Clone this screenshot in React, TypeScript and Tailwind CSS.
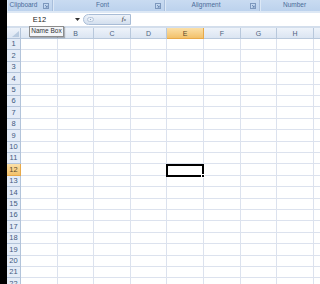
import React from "react";

const cols = [
  { l: "A", w: "w-[37px]" },
  { l: "B", w: "w-[36px]" },
  { l: "C", w: "w-[37px]" },
  { l: "D", w: "w-[36px]" },
  { l: "E", w: "w-[37px]" },
  { l: "F", w: "w-[37px]" },
  { l: "G", w: "w-[36px]" },
  { l: "H", w: "w-[37px]" },
  { l: "", w: "w-[37px]" },
];

const rowH = [
  "h-[11px]", "h-[12px]", "h-[11px]", "h-[12px]", "h-[11px]", "h-[11px]",
  "h-[12px]", "h-[11px]", "h-[12px]", "h-[11px]", "h-[11px]", "h-[12px]",
  "h-[11px]", "h-[12px]", "h-[11px]", "h-[11px]", "h-[12px]", "h-[11px]",
  "h-[12px]", "h-[11px]", "h-[11px]", "h-[12px]",
];

function Launcher() {
  return (
    <svg width="6" height="6" viewBox="0 0 6 6" className="shrink-0">
      <rect x="0.5" y="0.5" width="5" height="5" fill="none" stroke="#7d98bd" strokeWidth="1" />
      <path d="M2 2 L4.2 4.2 M4.2 2.6 V4.2 H2.6" stroke="#5f7fab" strokeWidth="0.8" fill="none" />
    </svg>
  );
}

function Group({ label, w, launcher = true }: { label: string; w: string; launcher?: boolean }) {
  return (
    <div className={`${w} h-full flex items-center border-r border-r-[#a9bfdc] shadow-[inset_1px_0_0_#dce8f6] shrink-0`}>
      <div className="flex-1 text-center text-[6.5px] leading-none text-[#4a6c99]">{label}</div>
      {launcher && (
        <div className="w-[12px] flex justify-center">
          <Launcher />
        </div>
      )}
    </div>
  );
}

export default function App() {
  return (
    <div className="w-[320px] h-[284px] overflow-hidden flex bg-white font-['Liberation_Sans',Arial,sans-serif]">
      <div className="w-[7px] bg-black shrink-0" />
      <div className="flex-1 flex flex-col relative overflow-hidden">
        {/* Ribbon group labels */}
        <div className="h-[11px] flex bg-gradient-to-b from-[#c9dbf1] to-[#bcd2ed] shrink-0">
          <Group label="Clipboard" w="w-[46px]" />
          <Group label="Font" w="w-[112px]" />
          <Group label="Alignment" w="w-[95px]" />
          <Group label="Number" w="w-[70px]" launcher={false} />
        </div>
        <div className="h-[2px] bg-[#dde8f5] shrink-0" />
        {/* Formula bar */}
        <div className="h-[13px] flex items-center bg-white shrink-0">
          <div className="w-[65px] text-center text-[7.5px] leading-none text-[#222]">E12</div>
          <div className="w-[10px] flex justify-center">
            <svg width="5" height="3" viewBox="0 0 5 3">
              <path d="M0 0 H5 L2.5 3 Z" fill="#333" />
            </svg>
          </div>
          <div className="ml-[1px] w-[48px] h-[11px] rounded-l-full rounded-r-[2px] border border-[#a8bcd6] bg-gradient-to-b from-[#eef3fa] to-[#d3dfee] flex items-center">
            <div className="ml-[3px] w-[7px] h-[5px] rounded-full border border-[#b6c6db] bg-[#e9eff7] flex items-center justify-center">
              <div className="w-[1px] h-[1px] bg-[#8ea4c2]" />
            </div>
            <div className="flex-1" />
            <div className="mr-[4px] text-[7px] leading-none italic font-['Liberation_Serif',serif] text-[#333]">
              f<span className="text-[5px]">x</span>
            </div>
          </div>
          <div className="flex-1" />
        </div>
        <div className="h-[2px] bg-[#d3deec] shrink-0" />
        {/* Grid */}
        <div className="flex flex-col shrink-0">
          <div className="h-[11px] flex shrink-0">
            <div className="w-[14px] h-full bg-gradient-to-b from-[#eef3fa] to-[#dbe5f2] border-r border-b border-[#b3c4da] relative shrink-0">
              <svg width="7" height="6" viewBox="0 0 7 6" className="absolute right-[1px] bottom-[1px]">
                <path d="M7 0 V6 H0 Z" fill="#b9cbe0" />
              </svg>
            </div>
            {cols.map((c, i) => (
              <div
                key={i}
                className={`${c.w} h-full shrink-0 flex items-center justify-center text-[7px] leading-none border-r border-b ${
                  c.l === "E"
                    ? "bg-gradient-to-b from-[#fbe0a8] to-[#f2c16a] border-[#e7a94a] text-[#5b4a2a]"
                    : "bg-gradient-to-b from-[#eef3fa] to-[#dbe5f2] border-[#b8c8dc] text-[#4e6380]"
                }`}
              >
                {c.l}
              </div>
            ))}
          </div>
          {rowH.map((h, i) => {
            const n = i + 1;
            const sel = n === 12;
            return (
              <div key={n} className={`${h} flex shrink-0`}>
                <div
                  className={`w-[14px] h-full shrink-0 flex items-center justify-center text-[7.5px] leading-none border-r border-b ${
                    sel
                      ? "bg-gradient-to-b from-[#fbe0a8] to-[#f2c16a] border-[#e7a94a] text-[#5b4a2a]"
                      : "bg-[#e4ecf7] border-[#b3c4da] text-[#3f5a80]"
                  }`}
                >
                  {n}
                </div>
                {cols.map((c, j) => (
                  <div key={j} className={`${c.w} h-full shrink-0 border-r border-b border-[#dce2ee]`} />
                ))}
              </div>
            );
          })}
        </div>
        {/* Selection box over E12 */}
        <div className="absolute left-[159px] top-[164px] w-[38px] h-[13px] border-2 border-black">
          <div className="absolute right-[-3px] bottom-[-3px] w-[4px] h-[4px] bg-black border border-white" />
        </div>
        {/* Name Box tooltip */}
        <div className="absolute left-[22px] top-[26px] w-[35px] h-[11px] bg-[#f3f5f8] border border-[#8c8c8c] shadow-[1px_1px_1px_rgba(0,0,0,0.25)] flex items-center justify-center text-[6.5px] leading-none text-[#333]">
          Name Box
        </div>
      </div>
    </div>
  );
}
